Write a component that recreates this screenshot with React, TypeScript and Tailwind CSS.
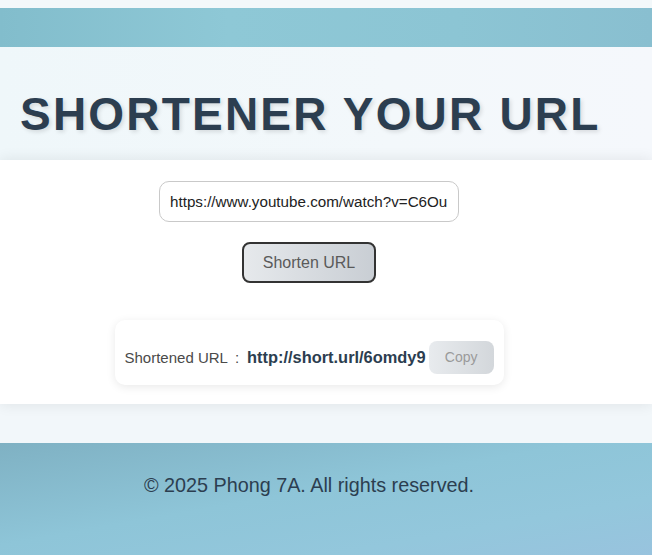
export default function App() {
  return (
    <div className="min-h-screen bg-[#f2f7fa] font-['Liberation_Sans',Arial,sans-serif]">
      <div className="h-2 bg-[#f3f8fa]" />
      <div className="h-[39px] bg-[linear-gradient(90deg,#82bdcc_0%,#8ec8d6_35%,#8cc5d4_70%,#89bfd0_100%)]" />

      <header className="h-[113px] bg-[linear-gradient(90deg,#eff7fa_0%,#f3f8fb_60%,#f5f8fc_100%)] px-5 pt-[41px]">
        <h1 className="text-[46px] font-bold leading-[1.15] tracking-[2.2px] text-[#2c3e50] [text-shadow:2px_2px_4px_rgba(0,0,0,0.12)]">
          SHORTENER YOUR URL
        </h1>
      </header>

      <main className="h-[244px] bg-white shadow-[0_0_14px_rgba(0,0,0,0.09)]">
        <div className="flex w-[618px] flex-col items-center pt-[21px]">
          <input
            type="text"
            readOnly
            value="https://www.youtube.com/watch?v=C6OuK9xJq2Y"
            className="h-[41px] w-[300px] rounded-[10px] border border-[#c9c9c9] bg-white px-[10px] text-[15.2px] text-[#222] outline-none"
          />
          <button
            type="button"
            className="mt-5 h-[41px] rounded-[8px] border-2 border-[#333] bg-[linear-gradient(90deg,#e6e9ec,#c9ced4)] px-[19px] text-[16px] text-[#5a5a5a]">
            Shorten URL
          </button>

          <div className="mt-[37px] flex w-[389px] items-center rounded-[10px] bg-white px-[10px] pb-[11px] pt-[21px] shadow-[0_2px_10px_rgba(0,0,0,0.09)]">
            <p className="flex items-baseline text-[15px] text-[#4a4a4a]">
              <span>Shortened URL</span>
              <span className="ml-[7px] mr-[8px]">:</span>
              <span className="text-[16.4px] font-bold text-[#2c3e50]">
                http://short.url/6omdy9
              </span>
            </p>
            <button
              type="button"
              className="ml-auto h-[33px] rounded-[8px] bg-[linear-gradient(90deg,#e8ebee,#d3d7db)] px-4 text-[14px] text-[#9a9a9a]">
              Copy
            </button>
          </div>
        </div>
      </main>

      <div className="h-[39px]" />

      <footer className="h-[112px] bg-[linear-gradient(170deg,#7fb1c3_0%,#8ec5d8_45%,#93c7dc_75%,#98c3de_100%)] pt-[31px]">
        <p className="w-[618px] text-center text-[19.8px] leading-[23px] text-[#2c3e50]">
          © 2025 Phong 7A. All rights reserved.
        </p>
      </footer>
    </div>
  );
}
